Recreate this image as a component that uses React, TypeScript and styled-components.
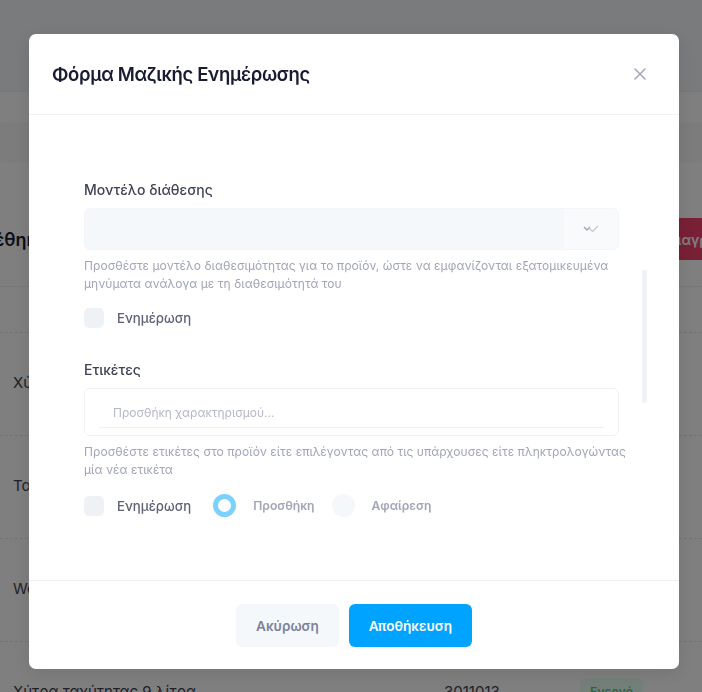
import React from "react"
import styled, { createGlobalStyle } from "styled-components"

const GlobalStyle = createGlobalStyle`
  html, body {
    margin: 0;
    padding: 0;
    height: 100%;
    overflow: hidden;
    background: #ffffff;
    font-family: Inter, "Noto Sans", "DejaVu Sans", sans-serif;
  }
  * { box-sizing: border-box; }
`

const rows = [
  { name: "Χύτρα ταχύτητας 6 λίτρα", code: "3011010" },
  { name: "Ταψί φούρνου 40cm", code: "3011011" },
  { name: "Wok αντικολλητικό 28cm", code: "3011012" },
  { name: "Χύτρα ταχύτητας 9 λίτρα", code: "3011013" }
]

const App = () => {
  return (
    <>
      <GlobalStyle />
      <Page>
        <Toolbar />
        <Band tone="white" size={30} />
        <Band tone="grey" size={40} />
        <Band tone="white" size={30} />
        <CardHeader>
          <CardTitle>Προστέθηκαν</CardTitle>
          <DangerButton>Διαγραφή</DangerButton>
        </CardHeader>
        <TableHead />
        {rows.map((row, index) => (
          <TableRow key={index}>
            <RowName>{row.name}</RowName>
            <RowCode>{row.code}</RowCode>
            <StatusBadge>Ενεργό</StatusBadge>
          </TableRow>
        ))}
      </Page>
      <Overlay>
        <Modal>
          <ModalHeader>
            <ModalTitle>Φόρμα Μαζικής Ενημέρωσης</ModalTitle>
            <CloseButton aria-label="close">
              <svg width="12" height="12" viewBox="0 0 12 12">
                <path d="M1 1 L11 11 M11 1 L1 11" stroke="#a1a5b7" strokeWidth="1.5" strokeLinecap="round" />
              </svg>
            </CloseButton>
          </ModalHeader>
          <ModalBody>
            <FieldLabel>Μοντέλο διάθεσης</FieldLabel>
            <SelectBox>
              <SelectValue />
              <SelectIndicator>
                <svg width="16" height="10" viewBox="0 0 16 10">
                  <path d="M1 3 L4 6 L7 3" stroke="#a1a5b7" strokeWidth="1.4" fill="none" />
                  <path d="M6 4 L9.5 7.5 L15 2" stroke="#c4c7d2" strokeWidth="1.2" fill="none" />
                </svg>
              </SelectIndicator>
            </SelectBox>
            <HelpText>
              <HelpLine>Προσθέστε μοντέλο διαθεσιμότητας για το προϊόν, ώστε να εμφανίζονται εξατομικευμένα</HelpLine>
              <HelpLine>μηνύματα ανάλογα με τη διαθεσιμότητά του</HelpLine>
            </HelpText>
            <OptionRow>
              <CheckItem>
                <CheckBox />
                <CheckLabel>Ενημέρωση</CheckLabel>
              </CheckItem>
            </OptionRow>

            <FieldLabel spaced>Ετικέτες</FieldLabel>
            <TagBox>
              <TagInput placeholder="Προσθήκη χαρακτηρισμού..." />
            </TagBox>
            <HelpText>
              <HelpLine>Προσθέστε ετικέτες στο προϊόν είτε επιλέγοντας από τις υπάρχουσες είτε πληκτρολογώντας</HelpLine>
              <HelpLine>μία νέα ετικέτα</HelpLine>
            </HelpText>
            <OptionRow>
              <CheckItem>
                <CheckBox />
                <CheckLabel>Ενημέρωση</CheckLabel>
              </CheckItem>
              <RadioItem>
                <Radio checked />
                <RadioLabel>Προσθήκη</RadioLabel>
              </RadioItem>
              <RadioItem>
                <Radio />
                <RadioLabel>Αφαίρεση</RadioLabel>
              </RadioItem>
            </OptionRow>
            <ScrollThumb />
          </ModalBody>
          <ModalFooter>
            <FooterButton variant="light">Ακύρωση</FooterButton>
            <FooterButton variant="primary">Αποθήκευση</FooterButton>
          </ModalFooter>
        </Modal>
      </Overlay>
    </>
  )
}

/* background page */

const Page = styled.div`
  height: 692px;
  overflow: hidden;
  background: #ffffff;
  color: #181c32;
`

const Toolbar = styled.div`
  height: 92px;
  background: #f5f6f9;
  border-bottom: 1px solid #eef0f4;
`

const Band = styled.div<{ tone: "white" | "grey"; size: number }>`
  height: ${p => p.size}px;
  background: ${p => (p.tone === "grey" ? "#f8f9fb" : "#ffffff")};
`

const CardHeader = styled.div`
  height: 95px;
  display: flex;
  align-items: center;
  justify-content: space-between;
  margin-left: -62px;
  margin-right: -55px;
  border-bottom: 1px solid #f1f1f4;
`

const CardTitle = styled.h3`
  margin: 0;
  font-size: 18px;
  font-weight: 600;
  color: #181c32;
`

const DangerButton = styled.button`
  height: 42px;
  padding: 0 20px;
  border: 0;
  border-radius: 6px;
  background: #f1416c;
  color: #ffffff;
  font-family: inherit;
  font-size: 14px;
  font-weight: 600;
`

const TableHead = styled.div`
  height: 46px;
  border-bottom: 1px dashed #e4e6ef;
`

const TableRow = styled.div`
  height: 103px;
  display: flex;
  align-items: center;
  padding: 0 0 4px 13px;
  border-bottom: 1px dashed #e4e6ef;
`

const RowName = styled.div`
  width: 431px;
  font-size: 15px;
  color: #3f4254;
`

const RowCode = styled.div`
  width: 136px;
  font-size: 15px;
  color: #3f4254;
`

const StatusBadge = styled.span`
  padding: 6px 10px;
  border-radius: 6px;
  background: #e8fff3;
  color: #50cd89;
  font-size: 12px;
  font-weight: 600;
`

/* modal */

const Overlay = styled.div`
  position: fixed;
  inset: 0;
  background: rgba(0, 0, 0, 0.5);
  padding: 34px 23px 0 29px;
`

const Modal = styled.div`
  position: relative;
  height: 635px;
  background: #ffffff;
  border-radius: 7px;
  box-shadow: 0 4px 20px rgba(0, 0, 0, 0.1);
  display: flex;
  flex-direction: column;
`

const ModalHeader = styled.div`
  height: 81px;
  display: flex;
  align-items: center;
  justify-content: space-between;
  padding: 0 28px 0 23px;
  border-bottom: 1px solid #eff2f5;
`

const ModalTitle = styled.h2`
  margin: 0;
  font-size: 18.5px;
  font-weight: 600;
  color: #181c32;
  letter-spacing: -0.35px;
`

const CloseButton = styled.button`
  width: 22px;
  height: 22px;
  padding: 0;
  border: 0;
  background: transparent;
  display: flex;
  align-items: center;
  justify-content: center;
`

const ModalBody = styled.div`
  position: relative;
  flex: 1;
  padding: 65px 60px 0 55px;
`

const FieldLabel = styled.label<{ spaced?: boolean }>`
  display: block;
  margin-top: ${p => (p.spaced ? "32px" : "0")};
  margin-bottom: 8px;
  font-size: 14px;
  line-height: 20px;
  font-weight: 500;
  color: #3f4254;
`

const SelectBox = styled.div`
  height: 42px;
  display: flex;
  border: 1px solid #f3f5f8;
  border-radius: 6px;
  background: #f5f8fa;
  overflow: hidden;
`

const SelectValue = styled.div`
  flex: 1;
`

const SelectIndicator = styled.div`
  width: 54px;
  display: flex;
  align-items: center;
  justify-content: center;
  background: #f9fafc;
`

const HelpText = styled.div`
  margin-top: 7px;
  font-size: 12px;
  line-height: 18px;
  color: #a1a5b7;
`

const HelpLine = styled.div`
  white-space: nowrap;
  letter-spacing: 0.06px;
`

const OptionRow = styled.div`
  margin-top: 15px;
  display: flex;
  align-items: center;
  gap: 22px;
`

const CheckItem = styled.div`
  display: flex;
  align-items: center;
  gap: 13px;
`

const CheckBox = styled.span`
  width: 20px;
  height: 20px;
  border-radius: 5px;
  background: #eff2f5;
`

const CheckLabel = styled.span`
  font-size: 13.2px;
  font-weight: 500;
  color: #5e6278;
`

const RadioItem = styled.div`
  display: flex;
  align-items: center;
  gap: 17px;
  margin-right: -5px;
`

const Radio = styled.span<{ checked?: boolean }>`
  width: 23px;
  height: 23px;
  border-radius: 50%;
  background: ${p => (p.checked ? "#ffffff" : "#f5f8fa")};
  border: ${p => (p.checked ? "5px solid #7cd1ff" : "0")};
`

const RadioLabel = styled.span`
  font-size: 12.2px;
  font-weight: 600;
  color: #a1a5b7;
`

const TagBox = styled.div`
  height: 48px;
  border: 1px solid #eff2f5;
  border-radius: 6px;
  padding: 0 14px;
`

const TagInput = styled.input`
  display: block;
  width: 100%;
  height: 39px;
  margin: 0;
  padding: 8px 14px 0;
  border: 0;
  border-bottom: 1px solid #eff2f5;
  outline: none;
  background: transparent;
  font-family: inherit;
  font-size: 12px;
  color: #3f4254;
  &::placeholder {
    color: #b5b8c6;
  }
`

const ScrollThumb = styled.div`
  position: absolute;
  right: 32px;
  top: 155px;
  width: 5px;
  height: 133px;
  border-radius: 2px;
  background: #eff2f5;
`

const ModalFooter = styled.div`
  height: 89px;
  display: flex;
  justify-content: center;
  gap: 10px;
  padding-top: 23px;
  border-top: 1px solid #eff2f5;
`

const FooterButton = styled.button<{ variant: "light" | "primary" }>`
  height: 43px;
  padding: 0 20px;
  border: 0;
  border-radius: 6px;
  font-family: inherit;
  font-size: 13.6px;
  font-weight: 600;
  background: ${p => (p.variant === "primary" ? "#00a3ff" : "#f5f8fa")};
  color: ${p => (p.variant === "primary" ? "#ffffff" : "#7e8299")};
`

export default App
